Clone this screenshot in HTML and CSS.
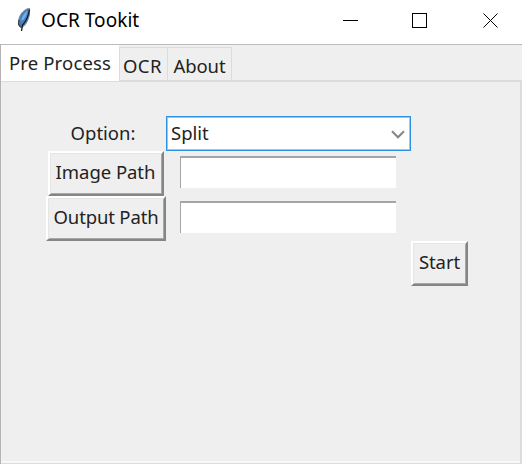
FILE: index.html
```html
<!DOCTYPE html>
<html lang="en">
<head>
<meta charset="utf-8">
<title>OCR Tookit</title>
<link rel="stylesheet" href="styles.css">
</head>
<body>
<div class="window">
  <header class="titlebar">
    <svg class="feather" width="16" height="26" viewBox="0 0 16 26">
      <path d="M13.500 1.500 C10 1.500 6.500 4.500 4.500 8 C2.500 11.500 2 15 3 18.500 L5 21 L8.500 18.500 C11 15.500 13 11 13.500 7 Z" fill="#4580c2" stroke="#7d8187" stroke-width="1"/>
      <path d="M11.500 3.500 C8 6 6 10 5 14 L7.500 12.500 C10 9.500 11 6.500 11.500 3.500Z" fill="#76b0ea"/>
      <path d="M13.500 2.500 C12.500 9 10.500 14 6.500 18 L5.500 24" fill="none" stroke="#161b22" stroke-width="1.300"/>
      <path d="M3 13 L2.500 17 L4.500 20" fill="none" stroke="#3b3a3a" stroke-width="1.200"/>
    </svg>
    <h1 class="title">OCR Tookit</h1>
    <svg class="controls" width="157" height="16" viewBox="0 0 157 16" shape-rendering="crispEdges">
      <path d="M0 7.500H15M69.500 .5H83.500V14.500H69.500Z" fill="none" stroke="#000"/>
      <path d="M140.500 .5L154.500 14.500M154.500 .5L140.500 14.500" fill="none" stroke="#000" stroke-width="1" shape-rendering="auto"/>
    </svg>
  </header>
  <main class="client">
    <nav class="tabs">
      <div class="tab active">Pre Process</div>
      <div class="tab tab-ocr">OCR</div>
      <div class="tab tab-about">About</div>
    </nav>
    <section class="pane">
      <div class="form">
        <label class="label">Option:</label>
        <div class="combo">Split
          <svg width="14" height="9" viewBox="0 0 14 9"><path d="M1 1.300L7 7.300L13 1.300" fill="none" stroke="#858585" stroke-width="2"/></svg>
        </div>
        <button class="btn image">Image Path</button>
        <div class="entry image-path"></div>
        <button class="btn output">Output Path</button>
        <div class="entry output-path"></div>
        <button class="btn start">Start</button>
      </div>
    </section>
  </main>
</div>
</body>
</html>
```
FILE: styles.css
```css
* { box-sizing: border-box; }
body {
  margin: 0;
  font: 18.5px/24px "Noto Sans", "Open Sans", sans-serif;
  color: #222;
  background: #efefef;
}
.window { width: 522px; height: 464px; display: flex; flex-direction: column; overflow: hidden; }
.titlebar { height: 44px; flex: none; display: flex; align-items: flex-start; background: #fff; }
.feather { margin: 7px 0 0 16px; }
.title { margin: 8px 0 0 9px; width: 302px; font-size: 19px; line-height: 24px; font-weight: 400; color: #000; white-space: nowrap; letter-spacing: .05px; }
.controls { margin-top: 13px; }
.client { flex: 1; display: flex; flex-direction: column; border-top: 1px solid #bcbcbc; border-left: 1px solid #b4b4b4; background: #efefef; }
.tabs { height: 36px; display: flex; align-items: flex-start; flex: none; }
.tab { display: flex; justify-content: center; white-space: nowrap; }
.active { width: 118px; height: 36px; padding-top: 6px; background: #fff; z-index: 1; letter-spacing: .15px; }
.tab-ocr, .tab-about { height: 34px; margin-top: 2px; padding-top: 6px; border: solid #dcdcdc; border-width: 1px 1px 0 0; }
.tab-ocr { width: 49px; padding-right: 2px; border-left-width: 1px; letter-spacing: .5px; }
.tab-about { width: 64px; letter-spacing: -.1px; }
.pane { flex: 1; margin-top: -1px; border: 1px solid #dcdcdc; border-width: 2px 2px 1px 0; box-shadow: inset 0 -2px #f8f8f8; padding: 34px 0 0 45px; }
.form { display: grid; grid-template-columns: 120px 245px 58px; grid-template-rows: 35px 45px 45px 45px; align-items: center; justify-items: center; white-space: nowrap; }
.label { grid-area: 1 / 1; padding: 0 6px 2px 0; }
.combo { grid-area: 1 / 2; width: 245px; height: 35px; display: flex; align-items: center; justify-content: space-between; padding: 0 5px 2px 4px; background: #fff; border: 1px solid #308fdf; box-shadow: inset 0 0 0 1px #98c7ef; }
.combo svg { margin-top: 3px; }
.btn { height: 45px; padding: 0 0 3px; border: 2px solid; border-color: #fff #858585 #858585 #fff; background: #efefef; color: inherit; font: inherit; box-shadow: inset 1px 1px #e5e5e5, inset -1px -1px #a8a8a8; }
.image { grid-area: 2 / 1; width: 116px; margin-right: 1px; letter-spacing: -.05px; }
.output { grid-area: 3 / 1; width: 120px; letter-spacing: -.15px; }
.entry { width: 216px; height: 32px; margin: 0 1px 3px 0; background: #fff; border: solid #a5a5a5; border-width: 2px 0 0 1px; }
.image-path { grid-area: 2 / 2; }
.output-path { grid-area: 3 / 2; }
.start { grid-area: 4 / 3; width: 57px; margin-right: 1px; letter-spacing: -.1px; }
```
